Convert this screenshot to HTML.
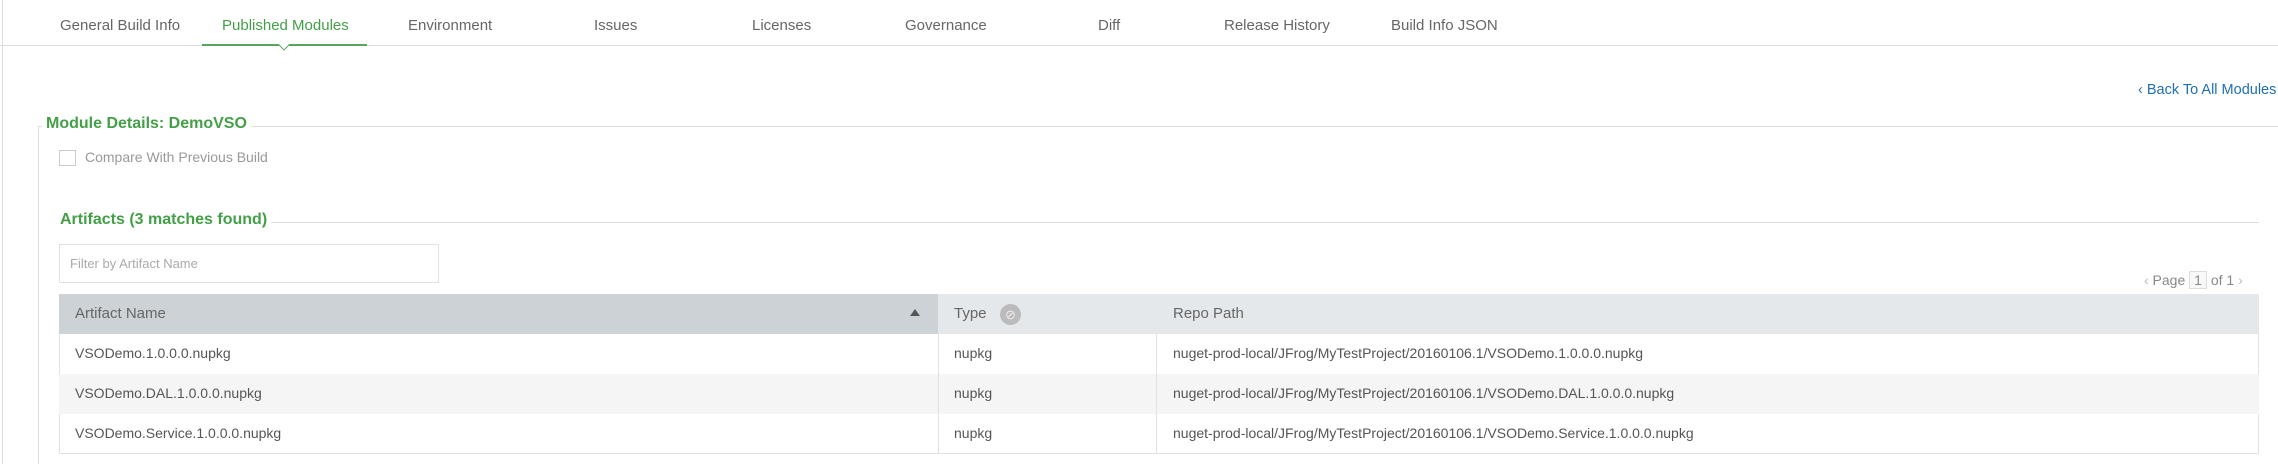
<!DOCTYPE html>
<html><head><meta charset="utf-8"><style>
*{margin:0;padding:0;box-sizing:border-box}
body{width:2278px;height:464px;background:#fff;font-family:"Liberation Sans",sans-serif;position:relative;overflow:hidden;color:#555}
.a{position:absolute;white-space:nowrap}
.tab{position:absolute;top:17px;font-size:15px;color:#666}
</style></head><body>
<div class="a" style="left:2px;top:0;width:1px;height:464px;background:#ddd"></div>
<div class="tab" style="left:60px">General Build Info</div>
<div class="tab" style="left:222px;color:#43a047">Published Modules</div>
<div class="tab" style="left:408px">Environment</div>
<div class="tab" style="left:594px">Issues</div>
<div class="tab" style="left:752px">Licenses</div>
<div class="tab" style="left:905px">Governance</div>
<div class="tab" style="left:1098px">Diff</div>
<div class="tab" style="left:1224px">Release History</div>
<div class="tab" style="left:1391px">Build Info JSON</div>
<div class="a" style="left:0;top:45px;width:2278px;height:1px;background:#ddd"></div>
<div class="a" style="left:202px;top:44px;width:165px;height:2px;background:#5aa55e"></div>
<div class="a" style="left:280px;top:45px;width:8px;height:8px;border-right:1px solid #5aa55e;border-bottom:1px solid #5aa55e;background:#fff;transform:rotate(45deg);margin-top:-4px"></div>

<div class="a" style="left:2138px;top:82px;font-size:14.5px;color:#1f6fb2">‹ Back To All Modules</div>

<div class="a" style="left:38px;top:126px;width:2240px;height:1px;background:#ddd"></div>
<div class="a" style="left:38px;top:126px;width:1px;height:338px;background:#ddd"></div>
<div class="a" style="left:42px;top:115px;padding:0 4px;background:#fff;font-size:16px;font-weight:bold;color:#43a047">Module Details: DemoVSO</div>
<div class="a" style="left:59px;top:150px;width:17px;height:16px;border:1px solid #ccc"></div>
<div class="a" style="left:85px;top:149px;font-size:14px;color:#999">Compare With Previous Build</div>

<div class="a" style="left:60px;top:222px;width:2199px;height:1px;background:#ddd"></div>
<div class="a" style="left:58px;top:211px;padding:0 4px 0 2px;background:#fff;font-size:16px;font-weight:bold;color:#43a047">Artifacts (3 matches found)</div>

<div class="a" style="left:59px;top:244px;width:380px;height:39px;border:1px solid #e2e2e2"></div>
<div class="a" style="left:70px;top:256px;font-size:13px;color:#aaa">Filter by Artifact Name</div>

<div class="a" style="left:2144px;top:271px;font-size:14px;color:#888"><span style="color:#bbb">‹</span> Page <span style="display:inline-block;border:1px solid #ddd;padding:0 4px;background:#f8f8f8">1</span> of 1 <span style="color:#bbb">›</span></div>

<div class="a" style="left:59px;top:294px;width:2200px;height:160px;border:1px solid #e2e2e2;border-top:none"></div>
<div class="a" style="left:59px;top:294px;width:879px;height:40px;background:#cdd2d6"></div>
<div class="a" style="left:938px;top:294px;width:1321px;height:40px;background:#e4e8eb"></div>
<div class="a" style="left:59px;top:374px;width:2200px;height:40px;background:#f5f5f5"></div>
<div class="a" style="left:938px;top:334px;width:1px;height:120px;background:#e2e2e2"></div>
<div class="a" style="left:1156px;top:334px;width:1px;height:120px;background:#e2e2e2"></div>
<div class="a" style="left:75px;top:305px;font-size:15px;color:#666">Artifact Name</div>
<div class="a" style="left:910px;top:309px;width:0;height:0;border-left:5px solid transparent;border-right:5px solid transparent;border-bottom:7px solid #555"></div>
<div class="a" style="left:954px;top:305px;font-size:15px;color:#666">Type</div>
<div class="a" style="left:1000px;top:304px;width:21px;height:21px;border-radius:50%;background:#bbb;color:#eee;font-size:13px;text-align:center;line-height:21px">⊘</div>
<div class="a" style="left:1173px;top:305px;font-size:15px;color:#666">Repo Path</div>

<div class="a" style="left:75px;top:345px;font-size:14px">VSODemo.1.0.0.0.nupkg</div>
<div class="a" style="left:954px;top:345px;font-size:14px">nupkg</div>
<div class="a" style="left:1173px;top:345px;font-size:14px">nuget-prod-local/JFrog/MyTestProject/20160106.1/VSODemo.1.0.0.0.nupkg</div>
<div class="a" style="left:75px;top:385px;font-size:14px">VSODemo.DAL.1.0.0.0.nupkg</div>
<div class="a" style="left:954px;top:385px;font-size:14px">nupkg</div>
<div class="a" style="left:1173px;top:385px;font-size:14px">nuget-prod-local/JFrog/MyTestProject/20160106.1/VSODemo.DAL.1.0.0.0.nupkg</div>
<div class="a" style="left:75px;top:425px;font-size:14px">VSODemo.Service.1.0.0.0.nupkg</div>
<div class="a" style="left:954px;top:425px;font-size:14px">nupkg</div>
<div class="a" style="left:1173px;top:425px;font-size:14px">nuget-prod-local/JFrog/MyTestProject/20160106.1/VSODemo.Service.1.0.0.0.nupkg</div>
</body></html>
